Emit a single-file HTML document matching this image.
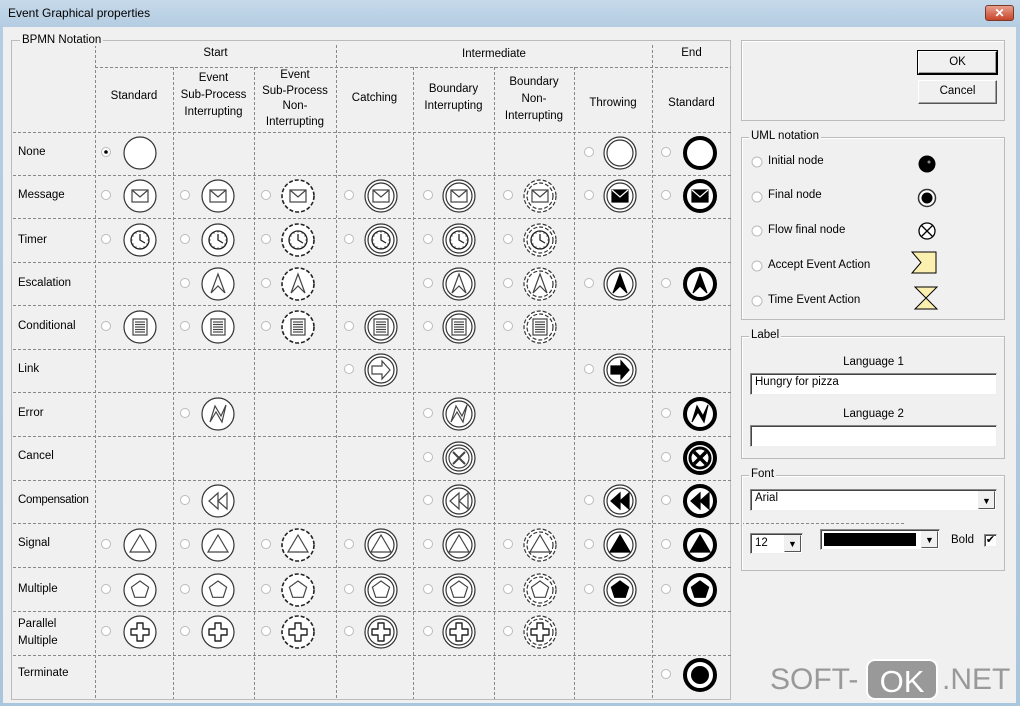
<!DOCTYPE html>
<html><head><meta charset="utf-8">
<style>
body{margin:0;width:1020px;height:706px;overflow:hidden;background:#6f9fc0;font-family:"Liberation Sans",sans-serif;font-size:11.5px;color:#000}
#win{position:absolute;left:0;top:0;width:1020px;height:706px;background:linear-gradient(#c5d9ea,#b5cde2 26px,#aac6dd);}
#title{position:absolute;left:8px;top:6px;font-size:12px;color:#000}
#close{position:absolute;left:985px;top:5px;width:29px;height:16px;border-radius:3px;background:linear-gradient(#e8a08c,#c7442a);border:1px solid #7a3a2a;color:#fff;font-weight:bold;font-size:12px;text-align:center;line-height:14px;box-sizing:border-box}
#client{position:absolute;left:3px;top:27px;width:1013px;height:676px;background:#f0f0f0}
.t{position:absolute;white-space:nowrap}
.c{position:absolute;text-align:center;line-height:17px}
.grp{position:absolute;border:1px solid #bbb;box-shadow:1px 1px 0 #fff inset}
.lg{position:absolute;background:#f0f0f0;padding:0 2px;top:-8px;left:7px}
.btn{position:absolute;background:#f0f0f0;border:1px solid;border-color:#fff #555 #555 #fff;box-shadow:inset -1px -1px 0 #a0a0a0;text-align:center;line-height:21px}
.edit{position:absolute;background:#fff;border:1px solid;border-color:#888 #eee #eee #888;box-shadow:inset 1px 1px 0 #444;box-sizing:border-box;padding:2px 4px}
.dd{position:absolute;width:17px;background:#f0f0f0;border:1px solid;border-color:#eee #555 #555 #eee;box-sizing:border-box;font-size:9px;text-align:center}
</style></head><body>
<div id="win">
<div id="title">Event Graphical properties</div>
<div id="close">✕</div>
<div id="client"></div>
<svg id="g" width="1020" height="706" style="position:absolute;left:0;top:0"></svg>

<div class="t" style="left:20px;top:34px;background:#f0f0f0;padding:0 2px">BPMN Notation</div>
<div class="c" style="left:95px;width:241px;top:45px">Start</div>
<div class="c" style="left:336px;width:316px;top:46px">Intermediate</div>
<div class="c" style="left:652px;width:79px;top:45px">End</div>
<div class="c" style="left:95px;width:78px;top:88px">Standard</div>
<div class="c" style="left:173px;width:81px;top:70px">Event<br>Sub-Process<br>Interrupting</div>
<div class="c" style="left:254px;width:82px;top:68px;line-height:15.5px">Event<br>Sub-Process<br>Non-<br>Interrupting</div>
<div class="c" style="left:336px;width:77px;top:90px">Catching</div>
<div class="c" style="left:413px;width:81px;top:81px">Boundary<br>Interrupting</div>
<div class="c" style="left:494px;width:80px;top:74px">Boundary<br>Non-<br>Interrupting</div>
<div class="c" style="left:574px;width:78px;top:95px">Throwing</div>
<div class="c" style="left:652px;width:79px;top:95px">Standard</div>

<div class="t" style="left:18px;top:146px">None</div>
<div class="t" style="left:18px;top:189px">Message</div>
<div class="t" style="left:18px;top:234px">Timer</div>
<div class="t" style="left:18px;top:277px">Escalation</div>
<div class="t" style="left:18px;top:320px">Conditional</div>
<div class="t" style="left:18px;top:363px">Link</div>
<div class="t" style="left:18px;top:407px">Error</div>
<div class="t" style="left:18px;top:450px">Cancel</div>
<div class="t" style="left:18px;top:494px;letter-spacing:-0.3px">Compensation</div>
<div class="t" style="left:18px;top:537px">Signal</div>
<div class="t" style="left:18px;top:583px">Multiple</div>
<div class="t" style="left:18px;top:616px;line-height:17px">Parallel<br>Multiple</div>
<div class="t" style="left:18px;top:667px">Terminate</div>

<div class="grp" style="left:741px;top:40px;width:262px;height:79px"></div>
<div class="btn" style="left:918px;top:51px;width:79px;height:23px;box-sizing:border-box;border-color:#fff #000 #000 #fff;outline:1px solid #000">OK</div>
<div class="btn" style="left:918px;top:80px;width:79px;height:24px;box-sizing:border-box">Cancel</div>

<div class="grp" style="left:741px;top:137px;width:262px;height:181px"><div class="lg">UML notation</div></div>
<div class="t" style="left:768px;top:155px">Initial node</div>
<div class="t" style="left:768px;top:189px">Final node</div>
<div class="t" style="left:768px;top:224px">Flow final node</div>
<div class="t" style="left:768px;top:259px">Accept Event Action</div>
<div class="t" style="left:768px;top:294px">Time Event Action</div>

<div class="grp" style="left:741px;top:336px;width:262px;height:121px"><div class="lg">Label</div></div>
<div class="c" style="left:750px;width:247px;top:354px">Language 1</div>
<div class="edit" style="left:750px;top:373px;width:247px;height:22px">Hungry for pizza</div>
<div class="c" style="left:750px;width:247px;top:406px">Language 2</div>
<div class="edit" style="left:750px;top:425px;width:247px;height:22px"></div>

<div class="grp" style="left:741px;top:475px;width:262px;height:94px"><div class="lg">Font</div></div>
<div class="edit" style="left:750px;top:489px;width:247px;height:22px">Arial</div>
<div class="dd" style="left:978px;top:491px;height:18px;line-height:18px">▼</div>
<div class="edit" style="left:750px;top:533px;width:53px;height:21px;padding-top:3px">12</div>
<div class="dd" style="left:784px;top:535px;height:17px;line-height:17px">▼</div>
<div class="edit" style="left:820px;top:529px;width:120px;height:21px;padding:3px"><div style="background:#000;width:92px;height:13px"></div></div>
<div class="dd" style="left:921px;top:531px;height:17px;line-height:17px">▼</div>
<div class="t" style="left:951px;top:534px">Bold</div>
<div class="edit" style="left:984px;top:534px;width:13px;height:13px;padding:0;font-size:11px;line-height:11px;text-align:center">✔</div>

<div class="t" style="left:770px;top:663px;font-size:30px;color:#999">SOFT-</div>
<div class="t" style="left:866px;top:659px;width:72px;height:41px;background:#999;border-radius:9px;border:2px solid #fff;color:#fff;font-size:31px;line-height:41px;text-align:center;box-sizing:border-box">OK</div>
<div class="t" style="left:942px;top:663px;font-size:30px;color:#999">.NET</div>
</div>
<script>
var s=document.getElementById('g'),h='';
function L(x1,y1,x2,y2){h+='<line x1="'+x1+'" y1="'+y1+'" x2="'+x2+'" y2="'+y2+'" stroke="#888" stroke-dasharray="3,2" stroke-width="1"/>';}
h+='<rect x="11.5" y="40.5" width="719" height="659" fill="none" stroke="#bbb"/>';
var cols=[95,173,254,336,413,494,574,652];
var rows=[132,175,218,262,305,349,392,436,480,523,567,611,655];
cols.forEach(function(x,i){var top=(i==0||i==3||i==7)?45:67;L(x+.5,top,x+.5,699);});
L(95,67.5,731,67.5);
rows.forEach(function(y){L(13,y+.5,731,y+.5);});
var cx=[140,218,298,381,459,540,620,700],rx=[106,185,266,349,428,508,589,666];
var cy=[153,196,240,284,327,370,414,458,501,545,590,632,675];
var av=[[0,6,7],[0,1,2,3,4,5,6,7],[0,1,2,3,4,5],[1,2,4,5,6,7],[0,1,2,3,4,5],[3,6],[1,4,7],[4,7],[1,4,6,7],[0,1,2,3,4,5,6,7],[0,1,2,3,4,5,6,7],[0,1,2,3,4,5],[7]];
function sym(r,f){var o='';
var a=' fill="'+(f?'#000':'#fff')+'" stroke="'+(f?'#000':'#444')+'" stroke-width="1.2"';
switch(r){
case 1:o='<rect x="-8" y="-6" width="16" height="12"'+a+'/><path d="M-8,-6 L0,1 L8,-6" fill="none" stroke="'+(f?'#fff':'#444')+'" stroke-width="1.2"/>';break;
case 2:o='<circle r="9" fill="#fff" stroke="#222" stroke-width="1.3"/>';for(var k=0;k<12;k++){var an=k*Math.PI/6;o+='<line x1="'+(7.5*Math.cos(an))+'" y1="'+(7.5*Math.sin(an))+'" x2="'+(9*Math.cos(an))+'" y2="'+(9*Math.sin(an))+'" stroke="#222"/>';}o+='<path d="M0,-6 L0,0 L5,3" fill="none" stroke="#222" stroke-width="1.3"/>';break;
case 3:o='<path d="M0,-10 L7,9 L0,2 L-7,9 Z"'+a+'/>';break;
case 4:o='<rect x="-7" y="-8" width="14" height="16"'+a+'/>';for(var k=-5;k<=5;k+=2.5)o+='<line x1="-5" x2="5" y1="'+k+'" y2="'+k+'" stroke="#444" stroke-width="1.2"/>';break;
case 5:o='<path d="M-9,-4 H1 V-9 L9,0 L1,9 V4 H-9 Z"'+a+' stroke-width="1.5"/>';break;
case 6:o='<path d="M-8,8 L-3,-8 L3,2 L8,-9 L4,8 L-2,-2 Z"'+a+'/>';break;
case 7:o='<circle r="10" fill="#fff" stroke="'+(f?'#000':'#444')+'" stroke-width="'+(f?3:1.2)+'"/><path d="M-6,-6 L6,6 M6,-6 L-6,6" stroke="'+(f?'#000':'#444')+'" stroke-width="'+(f?3.5:2)+'"/>';break;
case 8:o='<path d="M0,-8 L-9,0 L0,8Z M9,-8 L0,0 L9,8Z"'+a+'/>';break;
case 9:o='<path d="M0,-10 L10,7 L-10,7 Z"'+a+'/>';break;
case 10:var p=[];for(var k=0;k<5;k++){var an=-Math.PI/2+k*2*Math.PI/5;p.push((9*Math.cos(an)).toFixed(1)+','+(9*Math.sin(an)).toFixed(1));}o='<polygon points="'+p.join(' ')+'"'+a+'/>';break;
case 11:o='<path d="M-3,-9 H3 V-3 H9 V3 H3 V9 H-3 V3 H-9 V-3 H-3 Z" fill="#fff" stroke="#222" stroke-width="1.4" stroke-linejoin="round"/>';break;
case 12:o='<circle r="9" fill="#000"/>';break;}
return o;}
for(var r=0;r<13;r++)av[r].forEach(function(c){
var x=cx[c],y=cy[r];
h+='<circle cx="'+rx[c]+'" cy="'+(y-1)+'" r="4.5" fill="#fff" stroke="#bbb"/>';
if(r==0&&c==0)h+='<circle cx="'+rx[c]+'" cy="'+(y-1)+'" r="1.8" fill="#000"/>';
var g='<g transform="translate('+x+','+y+')">';
if(c<=1)g+='<circle r="16" fill="#fff" stroke="#333" stroke-width="1.2"/>';
else if(c==2)g+='<circle r="16" fill="#fff" stroke="#222" stroke-width="1.6" stroke-dasharray="4,2"/>';
else if(c<=4||c==6)g+='<circle r="16" fill="#fff" stroke="#333" stroke-width="1.2"/><circle r="13" fill="#fff" stroke="#333" stroke-width="1.2"/>';
else if(c==5)g+='<circle r="16" fill="#fff" stroke="#333" stroke-width="1.2" stroke-dasharray="4,2"/><circle r="13" fill="#fff" stroke="#333" stroke-width="1.2" stroke-dasharray="4,2"/>';
else g+='<circle r="15" fill="#fff" stroke="#000" stroke-width="4"/>';
g+=sym(r,c>=6)+'</g>';h+=g;});
[162,197,231,266,301].forEach(function(y){h+='<circle cx="757" cy="'+y+'" r="5" fill="#fff" stroke="#bbb"/>';});
h+='<circle cx="927" cy="164" r="8.5" fill="#000"/><circle cx="929" cy="162" r="1.5" fill="#888"/>';
h+='<circle cx="927" cy="198" r="8.5" fill="#fff" stroke="#333" stroke-width="1.5"/><circle cx="927" cy="198" r="5.5" fill="#000"/>';
h+='<circle cx="927" cy="231" r="8" fill="#fff" stroke="#000" stroke-width="1.3"/><path d="M921.5,225.5 L932.5,236.5 M932.5,225.5 L921.5,236.5" stroke="#000" stroke-width="1.3"/>';
h+='<path d="M912,252 H936 V273 H912 L921,262.5 Z" fill="#fbf0b0" stroke="#000"/>';
h+='<path d="M915,287 H937 L926,298 L937,309 H915 L926,298 Z" fill="#fbf0b0" stroke="#000"/>';
L(731,523.5,905,523.5);
s.innerHTML=h;
</script>
</body></html>
